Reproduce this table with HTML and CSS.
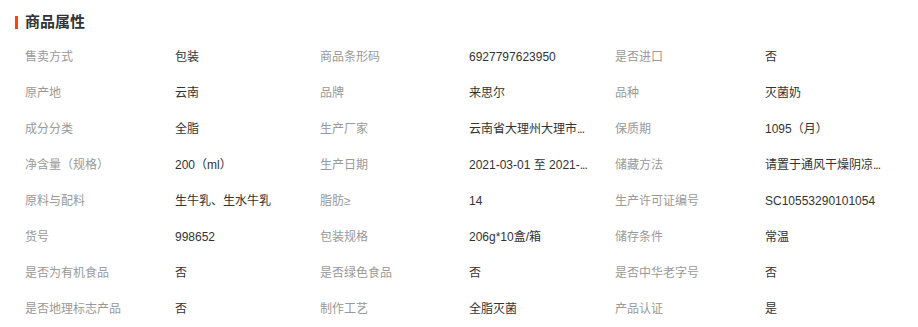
FILE: index.html
```html
<!DOCTYPE html>
<html lang="zh-CN">
<head>
<meta charset="utf-8">
<title>商品属性</title>
<link rel="stylesheet" href="styles.css">
</head>
<body>
<div class="attrs">
  <h2 class="attrs-title">商品属性</h2>
  <div class="attrs-grid">
    <span class="lbl">售卖方式</span><span class="val">包装</span>
    <span class="lbl">商品条形码</span><span class="val">6927797623950</span>
    <span class="lbl">是否进口</span><span class="val">否</span>

    <span class="lbl">原产地</span><span class="val">云南</span>
    <span class="lbl">品牌</span><span class="val">来思尔</span>
    <span class="lbl">品种</span><span class="val">灭菌奶</span>

    <span class="lbl">成分分类</span><span class="val">全脂</span>
    <span class="lbl">生产厂家</span><span class="val">云南省大理州大理市<span class="dots">...</span></span>
    <span class="lbl">保质期</span><span class="val">1095（月）</span>

    <span class="lbl">净含量（规格）</span><span class="val">200（ml）</span>
    <span class="lbl">生产日期</span><span class="val">2021-03-01 至 2021-<span class="dots">...</span></span>
    <span class="lbl">储藏方法</span><span class="val">请置于通风干燥阴凉<span class="dots">...</span></span>

    <span class="lbl">原料与配料</span><span class="val">生牛乳、生水牛乳</span>
    <span class="lbl">脂肪≥</span><span class="val">14</span>
    <span class="lbl">生产许可证编号</span><span class="val">SC10553290101054</span>

    <span class="lbl">货号</span><span class="val">998652</span>
    <span class="lbl">包装规格</span><span class="val">206g*10盒/箱</span>
    <span class="lbl">储存条件</span><span class="val">常温</span>

    <span class="lbl">是否为有机食品</span><span class="val">否</span>
    <span class="lbl">是否绿色食品</span><span class="val">否</span>
    <span class="lbl">是否中华老字号</span><span class="val">否</span>

    <span class="lbl">是否地理标志产品</span><span class="val">否</span>
    <span class="lbl">制作工艺</span><span class="val">全脂灭菌</span>
    <span class="lbl">产品认证</span><span class="val">是</span>
  </div>
</div>
</body>
</html>
```
FILE: styles.css
```css
html, body {
  margin: 0;
  padding: 0;
  background: #fff;
}
body {
  font-family: "Liberation Sans", "Noto Sans CJK SC", sans-serif;
  font-size: 12px;
  color: #333;
}
.attrs {
  padding-top: 12px;
}
.attrs-title {
  display: flex;
  align-items: center;
  margin: 0 0 0 15px;
  height: 20px;
  line-height: 20px;
  font-size: 15px;
  font-weight: bold;
  color: #333;
}
.attrs-title::before {
  content: "";
  display: block;
  width: 3px;
  height: 13px;
  background: #ff4400;
  margin-right: 7px;
}
.attrs-grid {
  margin-top: 7px;
  padding-left: 25px;
  display: grid;
  grid-template-columns: 150px 145px 149px 146px 150px 1fr;
  grid-auto-rows: 36px;
  line-height: 36px;
}
.lbl {
  color: #999;
  white-space: nowrap;
}
.val {
  color: #333;
  white-space: nowrap;
}
.dots {
  letter-spacing: -1px;
}
```
